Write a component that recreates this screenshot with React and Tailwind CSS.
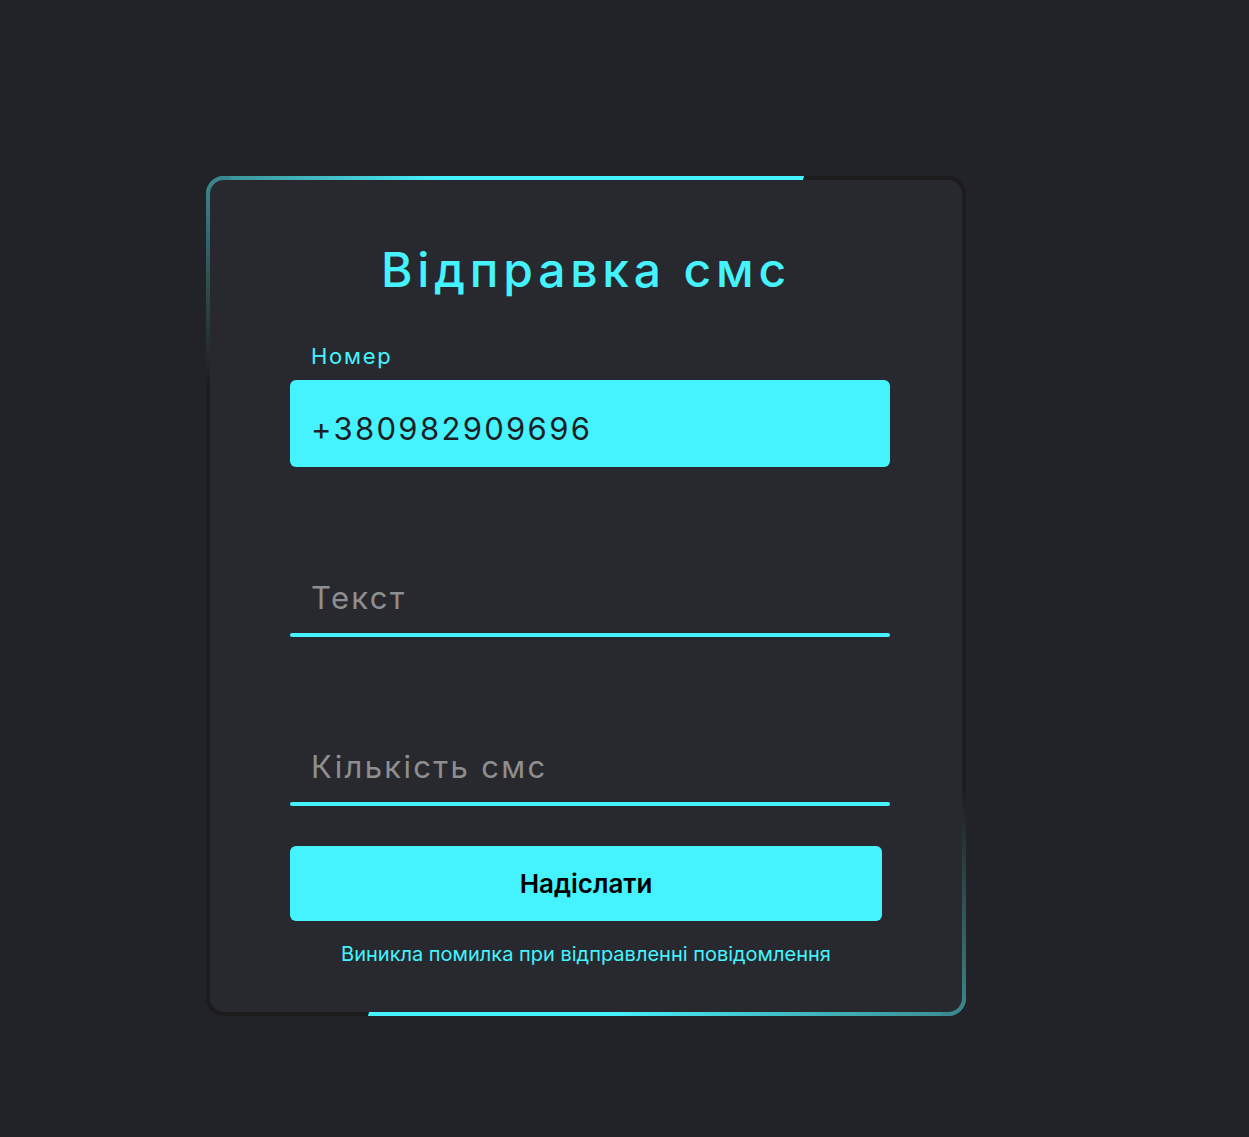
import React from "react";

export default function App() {
  const font = { fontFamily: "Inter, 'Noto Sans', sans-serif" };
  return (
    <div className="min-h-[1137px] w-full bg-[#222328] pt-[176px] pl-[206px]" style={font}>
      <div className="relative w-[760px] h-[840px] rounded-[18px] bg-[#1c1c1e] p-[4px] overflow-hidden">
        {/* top-left glow */}
        <div className="absolute top-0 left-0 w-[598px] h-[24px] bg-gradient-to-r from-[#3a8a8f] via-[#45f3ff] via-40% to-[#45f3ff] [clip-path:polygon(0_0,100%_0,99%_100%,0_100%)]" />
        <div className="absolute top-0 left-0 w-[24px] h-[210px] bg-gradient-to-b from-[#3a8a8f] to-[#1c1c1e]" />
        {/* bottom-right glow */}
        <div className="absolute bottom-0 right-0 w-[598px] h-[24px] bg-gradient-to-l from-[#3a8a8f] via-[#45f3ff] via-60% to-[#45f3ff] [clip-path:polygon(1%_0,100%_0,100%_100%,0_100%)]" />
        <div className="absolute bottom-0 right-0 w-[24px] h-[230px] bg-gradient-to-t from-[#3a8a8f] to-[#1c1c1e]" />

        <div className="relative z-10 h-full w-full rounded-[14px] bg-[#28292e] pt-[61px] pl-[80px]">
          <h1 className="w-[592px] text-center text-[48px] leading-[58px] tracking-[0.1em] font-medium text-[#45f3ff]">
            Відправка смс
          </h1>

          <div className="mt-[43px] pl-[21px] text-[22px] leading-[28px] tracking-[0.08em] text-[#45f3ff]">
            Номер
          </div>
          <div className="mt-[10px] flex h-[87px] w-[600px] items-center rounded-[6px] bg-[#45f3ff] pl-[21px] pt-[12px] text-[31px] tracking-[0.075em] text-[#1e1f24]">
            +380982909696
          </div>

          <div className="mt-[82px] w-[600px]">
            <div className="h-[84px] pt-[31px] pl-[21px] text-[31px] leading-[36px] tracking-[0.075em] text-[#8e8e8e]">
              Текст
            </div>
            <div className="h-[4px] w-full rounded-full bg-[#45f3ff]" />
          </div>

          <div className="mt-[81px] w-[600px]">
            <div className="h-[84px] pt-[31px] pl-[21px] text-[31px] leading-[36px] tracking-[0.075em] text-[#8e8e8e]">
              Кількість смс
            </div>
            <div className="h-[4px] w-full rounded-full bg-[#45f3ff]" />
          </div>

          <div className="mt-[40px] flex h-[75px] w-[592px] items-center justify-center rounded-[6px] bg-[#45f3ff] text-[26px] font-semibold text-black">
            Надіслати
          </div>

          <div className="mt-[21px] w-[592px] text-center text-[20px] leading-[24px] text-[#45f3ff]">
            Виникла помилка при відправленні повідомлення
          </div>
        </div>
      </div>
    </div>
  );
}
